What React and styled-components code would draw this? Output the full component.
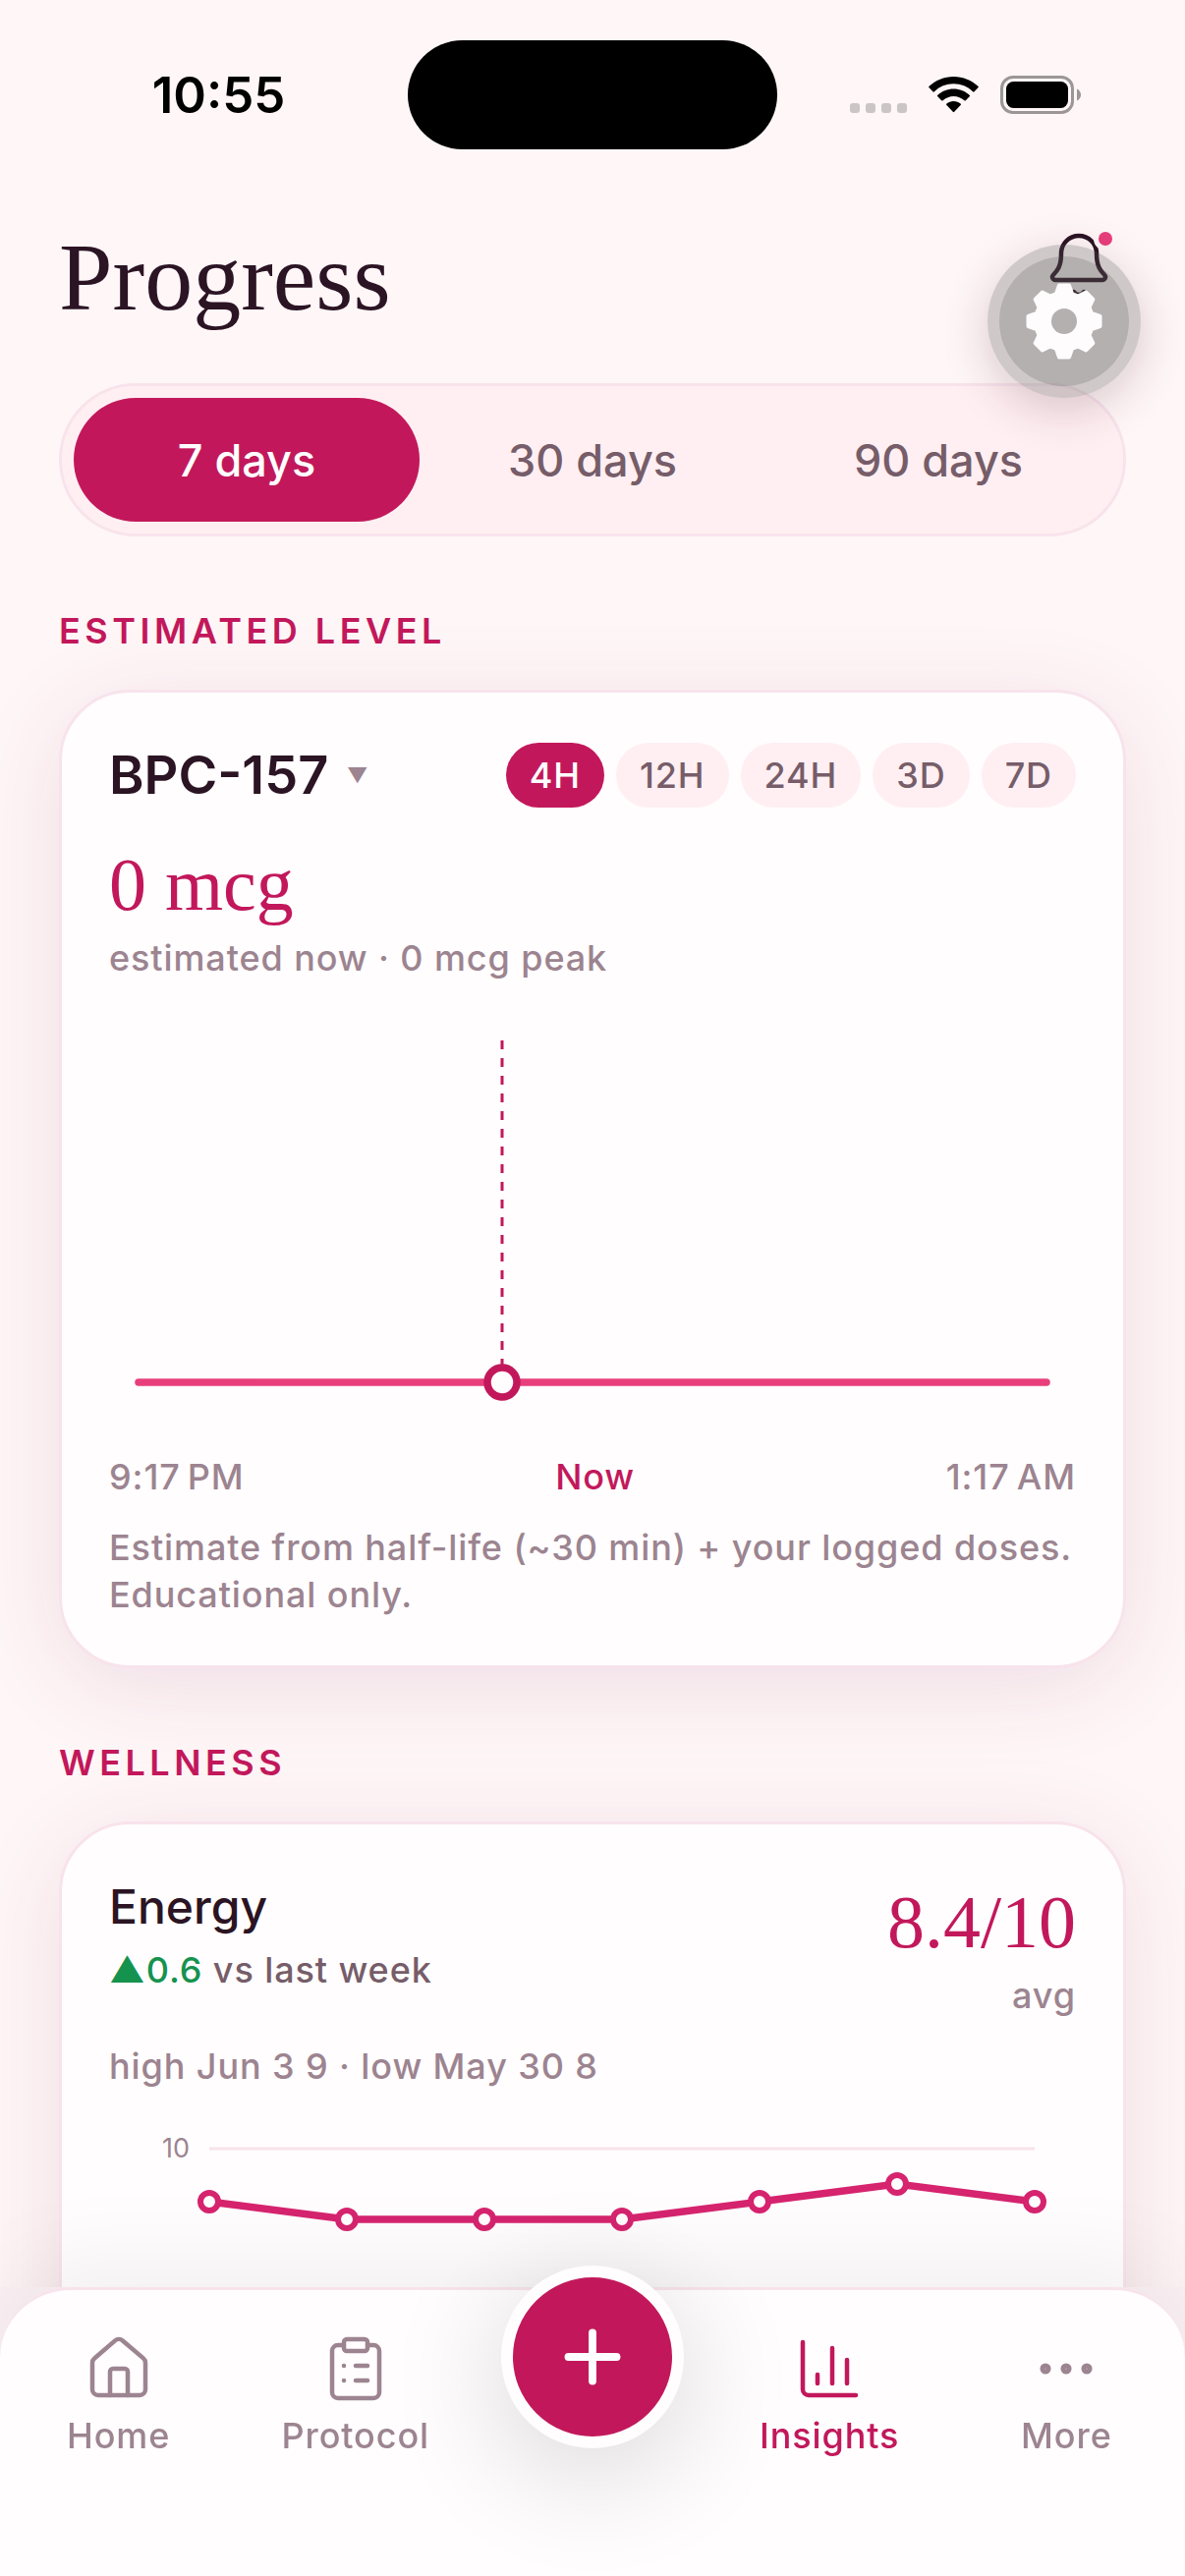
import React, { useState } from 'react';
import styled, { createGlobalStyle } from 'styled-components';
import { Bell, House, ClipboardList, ChartColumn, Ellipsis, Plus } from 'lucide-react';

const TABS = ['7 days', '30 days', '90 days'];
const RANGES = ['4H', '12H', '24H', '3D', '7D'];

const energyPoints = [
    { x: 102, y: 90 },
    { x: 242, y: 108 },
    { x: 382, y: 108 },
    { x: 522, y: 108 },
    { x: 662, y: 90 },
    { x: 802, y: 72 },
    { x: 942, y: 90 },
];

// outline of the 8 teeth, centre at 0,0
const gearPath = () => {
    const tooth = [[-8, -28], [-5, -36.5], [5, -36.5], [8, -28]];
    const points = [];
    for (let i = 0; i < 8; i++) {
        const a = (i * Math.PI) / 4;
        tooth.forEach(([x, y]) => {
            const px = x * Math.cos(a) - y * Math.sin(a);
            const py = x * Math.sin(a) + y * Math.cos(a);
            points.push(`${px.toFixed(2)} ${py.toFixed(2)}`);
        });
    }
    return `M${points.join('L')}ZM0 -15A15 15 0 1 0 0 15A15 15 0 1 0 0 -15Z`;
};

const StatusBar = () => {
    return (
        <StatusWrap>
            <Clock>10:55</Clock>
            <Island />
            <StatusIcons>
                <svg width="58" height="38" viewBox="0 0 58 38" fill="#cbc5c6">
                    <rect x="0" y="28" width="10" height="10" rx="3" />
                    <rect x="16" y="28" width="10" height="10" rx="3" />
                    <rect x="32" y="28" width="10" height="10" rx="3" />
                    <rect x="48" y="28" width="10" height="10" rx="3" />
                </svg>
                <svg width="51" height="38" viewBox="0 0 51 38" fill="#000">
                    <path d="M25.5 1C15.800 1 7 4.800 .6 10.800a1 1 0 0 0 0 1.500l3.800 3.900a1 1 0 0 0 1.500 0C11 11.300 18 8.300 25.500 8.300s14.500 3 19.600 7.900a1 1 0 0 0 1.500 0l3.800-3.900a1 1 0 0 0 0-1.500C44 4.800 35.200 1 25.500 1z" />
                    <path d="M25.500 13.500c-6.300 0-12 2.400-16.200 6.300a1 1 0 0 0 0 1.500l3.900 3.900a1 1 0 0 0 1.400 0c2.900-2.700 6.700-4.300 10.900-4.300s8 1.600 10.900 4.300a1 1 0 0 0 1.400 0l3.900-3.900a1 1 0 0 0 0-1.500c-4.200-3.900-9.900-6.300-16.200-6.300z" />
                    <path d="M25.500 26c-2.700 0-5.200 1-7.100 2.600a1 1 0 0 0 0 1.500l6.400 6.700a1 1 0 0 0 1.400 0l6.400-6.700a1 1 0 0 0 0-1.500C30.700 27 28.200 26 25.500 26z" />
                </svg>
                <svg width="82" height="39" viewBox="0 0 82 39">
                    <rect x="1.500" y="1.500" width="72" height="36" rx="11.500" fill="none" stroke="#9b9697" strokeWidth="3" />
                    <rect x="6" y="6" width="63" height="27" rx="7.500" fill="#000" />
                    <path d="M78 13.500c2.500 1 4 3.400 4 6s-1.500 5-4 6z" fill="#9b9697" />
                </svg>
            </StatusIcons>
        </StatusWrap>
    );
};

const LevelChart = () => {
    return (
        <Chart viewBox="0 0 984 432">
            <line x1="400" y1="36" x2="400" y2="372" stroke="#c2185b" strokeWidth="3" strokeDasharray="9 9" />
            <line x1="30" y1="384" x2="954" y2="384" stroke="#e83e7c" strokeWidth="7.500" strokeLinecap="round" />
            <circle cx="400" cy="384" r="15" fill="#fffdfe" stroke="#c2185b" strokeWidth="7.500" />
        </Chart>
    );
};

const EnergyChart = () => {
    return (
        <Chart viewBox="0 0 984 432">
            <text x="82" y="45" textAnchor="end" fontSize="27" fontWeight="400" fill="#9c8490">10</text>
            <line x1="102" y1="36" x2="942" y2="36" stroke="#f8e3ec" strokeWidth="3" />
            <polyline
                points={energyPoints.map((p) => `${p.x},${p.y}`).join(' ')}
                fill="none"
                stroke="#d6246f"
                strokeWidth="7.500"
            />
            {energyPoints.map((p) => (
                <circle key={p.x} cx={p.x} cy={p.y} r="9" fill="#fffdfe" stroke="#d6246f" strokeWidth="6" />
            ))}
        </Chart>
    );
};

const App = () => {
    const [tab, setTab] = useState('7 days');
    const [range, setRange] = useState('4H');

    return (
        <Screen>
            <GlobalStyle />
            <Content>
                <StatusBar />
                <Header>
                    <h1>Progress</h1>
                    <BellButton aria-label="Notifications">
                        <Bell size={72} strokeWidth={1.5} />
                        <Badge />
                    </BellButton>
                </Header>

                <Tabs>
                    {TABS.map((t) => (
                        <Tab key={t} $active={t === tab} onClick={() => setTab(t)}>{t}</Tab>
                    ))}
                </Tabs>

                <SectionTitle>ESTIMATED LEVEL</SectionTitle>
                <Card>
                    <CardHead>
                        <Picker>
                            <select aria-label="Compound">
                                <option>BPC-157</option>
                            </select>
                            <span>▼</span>
                        </Picker>
                        <Ranges>
                            {RANGES.map((r) => (
                                <Chip key={r} $active={r === range} onClick={() => setRange(r)}>{r}</Chip>
                            ))}
                        </Ranges>
                    </CardHead>
                    <Value>0 mcg</Value>
                    <Muted>estimated now · 0 mcg peak</Muted>
                    <LevelChart />
                    <Axis>
                        <span>9:17&#8239;PM</span>
                        <span className="now">Now</span>
                        <span>1:17&#8239;AM</span>
                    </Axis>
                    <Note>Estimate from half-life (~30 min) + your logged doses. Educational only.</Note>
                </Card>

                <SectionTitle>WELLNESS</SectionTitle>
                <Card>
                    <Metric>
                        <div>
                            <h3>Energy</h3>
                            <Trend><b>▲0.6</b> vs last week</Trend>
                        </div>
                        <div className="score">
                            <Value>8.4/10</Value>
                            <Muted>avg</Muted>
                        </div>
                    </Metric>
                    <Note>high Jun 3 9 · low May 30 8</Note>
                    <EnergyChart />
                </Card>
            </Content>

            <Nav>
                <NavItem href="#home">
                    <House size={72} strokeWidth={1.5} />
                    Home
                </NavItem>
                <NavItem href="#protocol">
                    <ClipboardList size={72} strokeWidth={1.5} />
                    Protocol
                </NavItem>
                <AddButton aria-label="Add">
                    <Plus size={84} strokeWidth={2.25} />
                </AddButton>
                <NavItem href="#insights" $active>
                    <ChartColumn size={72} strokeWidth={1.5} />
                    Insights
                </NavItem>
                <NavItem href="#more">
                    <Ellipsis size={72} strokeWidth={1.7} />
                    More
                </NavItem>
            </Nav>

            <DevButton aria-label="Settings">
                <svg width="78" height="78" viewBox="-39 -39 78 78">
                    <path d={gearPath()} fill="#fffcfd" stroke="#fffcfd" strokeWidth="4" strokeLinejoin="round" fillRule="evenodd" />
                </svg>
            </DevButton>
        </Screen>
    );
};

export default App;

const GlobalStyle = createGlobalStyle`
    * {
        box-sizing: border-box;
    }
    body {
        margin: 0;
        background: #fff6f7;
        font-family: Inter, "Liberation Sans", sans-serif;
        font-weight: 500;
        color: #2b1423;
    }
    h1, h2, h3, p {
        margin: 0;
    }
    button, select {
        border: 0;
        padding: 0;
        font: inherit;
        cursor: pointer;
    }
`

const Screen = styled.div `
    position: relative;
    display: flex;
    flex-direction: column;
    height: 100vh;
    background: #fbf1f5;
`

const Content = styled.main `
    flex: 1;
    min-height: 0;
    overflow-y: auto;
    scrollbar-width: none;
    padding: 41px 60px 60px;
    background: #fff6f7;
`

const StatusWrap = styled.div `
    display: grid;
    grid-template-columns: 1fr 376px 1fr;
    align-items: center;
    margin: 0 -60px;
`

const Clock = styled.div `
    padding-left: 30px;
    text-align: center;
    font-size: 51px;
    font-weight: 600;
    color: #000;
`

const Island = styled.div `
    height: 111px;
    border-radius: 56px;
    background: #000;
`

const StatusIcons = styled.div `
    display: flex;
    justify-content: center;
    gap: 22px;
    padding-right: 32px;
`

const Header = styled.header `
    display: flex;
    justify-content: space-between;
    align-items: flex-start;
    margin: 70px 0 48px;
    h1 {
        font-family: "Liberation Serif", serif;
        font-size: 98px;
        font-weight: 400;
        line-height: 120px;
    }
`

const BellButton = styled.button `
    position: relative;
    display: flex;
    justify-content: center;
    align-items: center;
    width: 96px;
    height: 96px;
    background: none;
    color: #2b1423;
`

const Badge = styled.span `
    position: absolute;
    top: 9px;
    right: 9px;
    width: 24px;
    height: 24px;
    border: 5px solid #fff6f7;
    border-radius: 50%;
    background: #e83e7c;
`

const Tabs = styled.div `
    display: flex;
    padding: 12px;
    border: 3px solid #f8e3ec;
    border-radius: 78px;
    background: #ffeff2;
`

const Tab = styled.button `
    flex: 1;
    height: 126px;
    border-radius: 63px;
    font-size: 45px;
    background: ${(props) => (props.$active ? '#c2185b' : 'transparent')};
    color: ${(props) => (props.$active ? '#fff' : '#765d69')};
`

const SectionTitle = styled.h2 `
    margin: 72px 0 36px;
    font-size: 36px;
    font-weight: 600;
    line-height: 48px;
    letter-spacing: 0.125em;
    color: #c2185b;
`

const Card = styled.section `
    padding: 48px;
    border: 3px solid #f8e3ec;
    border-radius: 72px;
    background: #fffdfe;
    box-shadow: 0 18px 96px rgba(100, 25, 75, 0.11);
`

const CardHead = styled.div `
    display: flex;
    justify-content: space-between;
    align-items: center;
    height: 72px;
    margin-bottom: 24px;
`

const Picker = styled.label `
    display: flex;
    align-items: center;
    gap: 18px;
    select {
        appearance: none;
        background: none;
        font-size: 54px;
        font-weight: 600;
        line-height: 72px;
        color: #2b1423;
    }
    span {
        font-size: 21px;
        color: #9c8490;
    }
`

const Ranges = styled.div `
    display: flex;
    gap: 12px;
`

const Chip = styled.button `
    height: 66px;
    padding: 0 24px;
    border-radius: 33px;
    font-size: 36px;
    letter-spacing: 0.025em;
    background: ${(props) => (props.$active ? '#c2185b' : '#ffeff2')};
    color: ${(props) => (props.$active ? '#fff' : '#765d69')};
`

const Value = styled.p `
    font-family: "Liberation Serif", serif;
    font-size: 76px;
    font-weight: 400;
    line-height: 102px;
    color: #c2185b;
`

const Muted = styled.p `
    font-size: 36px;
    line-height: 48px;
    letter-spacing: 0.025em;
    color: #9c8490;
`

const Chart = styled.svg `
    display: block;
    width: 100%;
    margin: 24px 0;
`

const Axis = styled.div `
    display: flex;
    justify-content: space-between;
    font-size: 36px;
    line-height: 48px;
    letter-spacing: 0.025em;
    color: #9c8490;
    .now {
        color: #c2185b;
    }
`

const Note = styled(Muted) `
    margin-top: 24px;
`

const Metric = styled.div `
    display: flex;
    justify-content: space-between;
    h3 {
        font-size: 48px;
        font-weight: 500;
        line-height: 72px;
    }
    .score {
        text-align: right;
    }
`

const Trend = styled.p `
    margin-top: 4px;
    font-size: 36px;
    line-height: 48px;
    letter-spacing: 0.025em;
    color: #765d69;
    b {
        font-weight: 500;
        color: #16924f;
    }
`

const Nav = styled.nav `
    position: relative;
    display: grid;
    grid-template-columns: repeat(5, 1fr);
    justify-items: center;
    align-items: start;
    height: 294px;
    padding-top: 44px;
    border-top: 3px solid #f8e3ec;
    border-radius: 72px 72px 0 0;
    background: #fffdfe;
    box-shadow: 0 -24px 96px rgba(0, 0, 0, 0.06);
`

const NavItem = styled.a `
    display: flex;
    flex-direction: column;
    align-items: center;
    gap: 8px;
    font-size: 36px;
    line-height: 48px;
    letter-spacing: 0.025em;
    text-decoration: none;
    color: ${(props) => (props.$active ? '#c2185b' : '#9c8490')};
`

const AddButton = styled.button `
    display: flex;
    justify-content: center;
    align-items: center;
    width: 186px;
    height: 186px;
    margin-top: -69px;
    border: 12px solid #fffdfe;
    border-radius: 50%;
    background: #c2185b;
    color: #fff;
    box-shadow: 0 24px 120px rgba(0, 0, 0, 0.16);
`

const DevButton = styled.button `
    position: absolute;
    top: 249px;
    right: 45px;
    display: flex;
    justify-content: center;
    align-items: center;
    width: 156px;
    height: 156px;
    border: 12px solid transparent;
    border-radius: 50%;
    background:
        linear-gradient(rgba(80, 80, 80, 0.21), rgba(80, 80, 80, 0.21)) padding-box,
        linear-gradient(rgba(80, 80, 80, 0.27), rgba(80, 80, 80, 0.27)) border-box;
    box-shadow: 0 12px 48px rgba(60, 20, 40, 0.2);
`
